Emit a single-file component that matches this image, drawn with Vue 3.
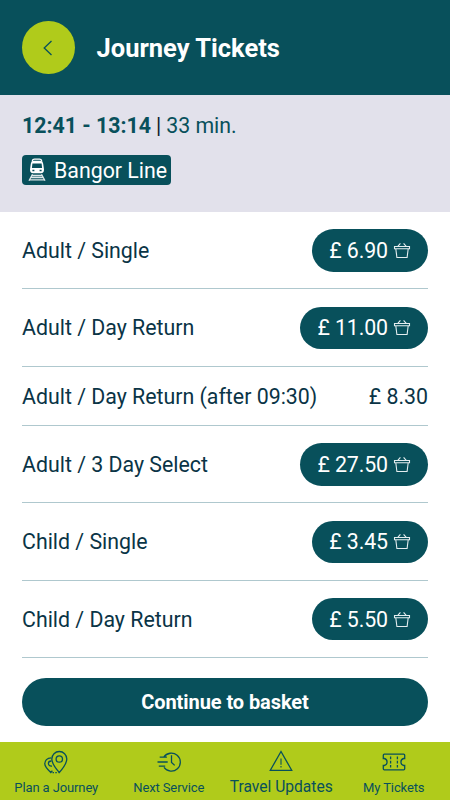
<script setup>
const tickets = [
  { name: 'Adult / Single', price: '£ 6.90', buy: true },
  { name: 'Adult / Day Return', price: '£ 11.00', buy: true },
  { name: 'Adult / Day Return (after 09:30)', price: '£ 8.30', buy: false },
  { name: 'Adult / 3 Day Select', price: '£ 27.50', buy: true },
  { name: 'Child / Single', price: '£ 3.45', buy: true },
  { name: 'Child / Day Return', price: '£ 5.50', buy: true }
]
</script>

<template>
  <div class="screen">
    <header class="header">
      <button class="back" aria-label="Back">
        <svg width="10" height="16" viewBox="0 0 10 16"><path d="M8.500 1 1.200 8l7.300 7" /></svg>
      </button>
      <h1 class="title">Journey Tickets</h1>
    </header>

    <section class="summary">
      <div class="times"><b>12:41 - 13:14</b><span class="bar">|</span><span class="duration">33 min.</span></div>
      <div class="line">
        <svg class="train" width="18" height="24" viewBox="0 0 18 24">
          <path d="M4.200 3Q4.600 1.200 6.500 1.200h5q1.900 0 2.300 1.800" fill="none" stroke="#fff" stroke-width="1.200" />
          <path fill="#fff" fill-rule="evenodd" d="M5 2.800h8q1.800 0 2.200 3l.8 5.700q0 3.800-3 3.800H5q-3 0-3-3.800l.8-5.700q.4-3 2.200-3ZM4.400 5.400 3.900 10h10.200l-.5-4.600ZM4.400 11.700v1.600h2v-1.600Zm7.200 0v1.600h2v-1.600Z" />
          <path d="m4.500 16.200-3.500 6.500m12.500-6.500 3.500 6.500M4 17.500h10M2.800 19.500h12.400M1.500 21.800h15" fill="none" stroke="#dce7e9" stroke-width="1.300" />
        </svg>
        <span class="line-name">Bangor Line</span>
      </div>
    </section>

    <main class="list">
      <div v-for="t in tickets" :key="t.name" class="row" :class="{ plain: !t.buy }">
        <span class="name">{{ t.name }}</span>
        <button v-if="t.buy" class="price pill">
          <span>{{ t.price }}</span>
          <svg width="18" height="17" viewBox="0 0 18 17">
            <path d="M1.500 4.500h15v2.200h-15zM2.800 6.700l1.100 8.800h10.200l1.100-8.800M4.800 4.300l2.600-3M13.200 4.300l-2.600-3" />
          </svg>
        </button>
        <span v-else class="price">{{ t.price }}</span>
      </div>
    </main>

    <button class="continue">Continue to basket</button>

    <nav class="nav">
      <a class="item journey">
        <svg width="24" height="24" viewBox="0 0 24 24">
          <path d="M15.300 22.500C11.800 18.500 7.800 14 7.800 9a7.500 7.500 0 0 1 15 0c0 5-4 9.500-7.500 13.500Z" />
          <circle cx="15.300" cy="9" r="3.200" />
          <path d="M7.200 7.800C3 7.800.8 10.700.8 13.800c0 3.200 2.500 5.500 6 8.700l1.600-1.700M7.400 11c-2 0-3 1.200-3 2.600s1.300 2.700 3.600 2.400" />
          <path d="M8.500 22.600h6" stroke-dasharray="1.500 1.300" />
        </svg>
        <span>Plan a Journey</span>
      </a>
      <a class="item service">
        <svg width="24" height="24" viewBox="0 0 24 24">
          <path d="M6.800 7.200A9 9 0 1 1 7 17.400M14.500 5.200v7.200l3.200 3M2.700 7.200h7.200M.5 12h10.200M1.800 16.200h6.400" />
        </svg>
        <span>Next Service</span>
      </a>
      <a class="item updates">
        <svg width="24" height="24" viewBox="0 0 24 24">
          <path d="M12 1.500 1.300 20.300h21.400Z" />
          <path d="M12 8.500v6.200M12 15.900v1.500" stroke-width="1.100" />
        </svg>
        <span>Travel Updates</span>
      </a>
      <a class="item mine">
        <svg width="24" height="24" viewBox="0 0 24 24">
          <path d="M2.300 4.200h19.400q1 0 1 1v3.300h-1a3.600 3.600 0 0 0 0 7h1v3.300q0 1-1 1H2.300q-1 0-1-1v-3.300h1a3.600 3.600 0 0 0 0-7h-1V5.200q0-1 1-1Z" />
          <path d="M8.600 6.500v11M15.400 6.500v11" stroke-dasharray="2.800 1.500" />
        </svg>
        <span>My Tickets</span>
      </a>
    </nav>
  </div>
</template>

<style>
body {
  margin: 0;
}
</style>

<style scoped>
.screen {
  width: 450px;
  height: 800px;
  display: flex;
  flex-direction: column;
  background: #fff;
  overflow: hidden;
  font-family: Roboto, "Liberation Sans", sans-serif;
  color: #0a3446;
}
button {
  border: 0;
  padding: 0;
  font-family: inherit;
}
svg {
  display: block;
  flex: none;
}
.header {
  box-sizing: border-box;
  height: 95px;
  display: flex;
  align-items: center;
  padding-left: 22px;
  background: #08505b;
}
.back {
  width: 52.5px;
  height: 53px;
  border-radius: 50%;
  background: #b0cb1b;
  display: flex;
  align-items: center;
  justify-content: center;
}
.back svg {
  fill: none;
  stroke: #08505b;
  stroke-width: 1.3;
}
.title {
  margin: 0 0 0 22px;
  color: #fff;
  font-size: 25.5px;
  line-height: 30px;
  font-weight: 700;
}
.summary {
  box-sizing: border-box;
  height: 117px;
  padding: 18px 22px 0;
  background: #e2e1eb;
  color: #08505b;
}
.times {
  display: flex;
  font-size: 21.33px;
  line-height: 25px;
}
.times b {
  font-weight: 700;
}
.bar {
  margin: 0 5px;
  color: #0a2030;
}
.line {
  box-sizing: border-box;
  width: 149px;
  height: 30px;
  margin-top: 17px;
  padding-left: 6px;
  border-radius: 4px;
  background: #08505b;
  color: #fff;
  display: flex;
  align-items: center;
  gap: 8px;
}
.line-name {
  font-size: 21.33px;
  white-space: nowrap;
}
.list {
  padding: 0 22px;
}
.row {
  box-sizing: border-box;
  height: 77.25px;
  padding-top: 1px;
  display: flex;
  align-items: center;
  justify-content: space-between;
  border-bottom: 1px solid #afc8ce;
  font-size: 21.33px;
}
.plain {
  height: 59.5px;
}
.name,
.price {
  white-space: nowrap;
}
.pill {
  height: 42.5px;
  padding: 0 17px;
  border-radius: 22px;
  background: #08505b;
  color: #fff;
  font-size: 21.33px;
  letter-spacing: -0.1px;
  display: flex;
  align-items: center;
  gap: 5px;
}
.pill svg {
  fill: none;
  stroke: #e4edef;
  stroke-width: 1.1;
}
.continue {
  flex: none;
  height: 48px;
  margin: 20px 22px 0;
  border-radius: 24px;
  background: #08505b;
  color: #fff;
  font-size: 20px;
  letter-spacing: -0.08px;
  font-weight: 700;
}
.nav {
  box-sizing: border-box;
  height: 58px;
  margin-top: auto;
  display: grid;
  grid-template-columns: repeat(4, 112.5px);
  background: #b0cb1b;
  color: #08505b;
}
.item {
  display: flex;
  flex-direction: column;
  align-items: center;
  padding-top: 8px;
  font-size: 13px;
  letter-spacing: -0.12px;
  line-height: 20px;
  white-space: nowrap;
}
.item span {
  margin-top: 4px;
}
.item svg {
  fill: none;
  stroke: #08505b;
  stroke-width: 1.3;
}
.updates {
  font-size: 15.6px;
  letter-spacing: 0;
}
.updates span {
  margin-top: 3px;
}
</style>
